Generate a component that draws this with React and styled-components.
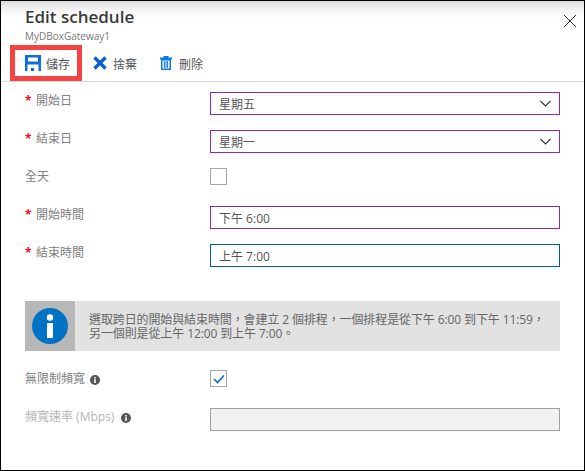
import React from "react";
import styled, { createGlobalStyle } from "styled-components";

const GlobalStyle = createGlobalStyle`
  html, body {
    margin: 0;
    padding: 0;
    background: #fff;
  }
  * {
    box-sizing: border-box;
  }
`;

const FONT = `"Open Sans", "Noto Sans CJK TC", sans-serif`;

const Panel = styled.div`
  width: 585px;
  height: 471px;
  border: 1px solid #000;
  font-family: ${FONT};
  font-size: 12px;
  color: #555;
  background: #fff;
  overflow: hidden;
`;

const Header = styled.div`
  height: 44px;
  padding: 5px 8px 0 24px;
  display: flex;
  justify-content: space-between;
  background: linear-gradient(#dcdcdc 0, #f6f6f6 10px, #fff 18px);
`;

const Titles = styled.div`
  display: flex;
  flex-direction: column;
`;

const Title = styled.div`
  font-size: 17px;
  line-height: 22px;
  font-weight: 600;
  color: #3a3a3a;
`;

const Subtitle = styled.div`
  font-size: 10px;
  line-height: 13px;
  margin-top: 2px;
  color: #777;
`;

const CloseButton = styled.svg`
  width: 12px;
  height: 12px;
  margin-top: 9px;
`;

const Toolbar = styled.div`
  position: relative;
  height: 37px;
  padding-left: 24px;
  display: flex;
  align-items: center;
  border-bottom: 1px solid #d9d9d9;
`;

const ToolButton = styled.div`
  display: flex;
  align-items: center;
  gap: ${(p) => p.$gap}px;
  margin-right: ${(p) => p.$after}px;
  color: #555;
  svg {
    display: block;
  }
`;

const ToolText = styled.span`
  padding-top: 2px;
`;

const Highlight = styled.div`
  position: absolute;
  left: 9px;
  top: 0;
  width: 72px;
  height: 36px;
  border: 5px solid #f44343;
`;

const Form = styled.div`
  padding: 10px 24px 0;
  display: flex;
  flex-direction: column;
`;

const Row = styled.div`
  display: flex;
  height: 23px;
  margin-bottom: ${(p) => p.$after ?? 15}px;
`;

const Label = styled.div`
  width: 185px;
  padding-top: 1px;
  display: flex;
  align-items: flex-start;
  line-height: 16px;
  color: ${(p) => (p.$disabled ? "#b4b4b4" : "#808080")};
`;

const Star = styled.span`
  width: 11px;
  color: #e81123;
  font-weight: 700;
`;

const Field = styled.div`
  width: 350px;
  height: 23px;
  padding: 0 8px;
  display: flex;
  align-items: center;
  justify-content: space-between;
  border: 1px solid ${(p) => p.$border};
  background: ${(p) => p.$bg || "#fff"};
  color: #555;
`;

const Check = styled.div`
  width: 17px;
  height: 17px;
  border: 1px solid #a6a6a6;
  background: #fff;
  display: flex;
  align-items: center;
  justify-content: center;
`;

const InfoBox = styled.div`
  height: 50px;
  margin-bottom: 19px;
  display: flex;
  background: #e2e2e2;
`;

const InfoIconCell = styled.div`
  width: 50px;
  display: flex;
  align-items: center;
  justify-content: center;
  background: #b8b8b8;
`;

const InfoText = styled.div`
  padding: 12px 0 0 14px;
  line-height: 14px;
  letter-spacing: -0.11px;
  color: #666;
  white-space: nowrap;
`;

const Hint = styled.svg`
  width: 10px;
  height: 10px;
  margin: 4px 0 0 ${(p) => p.$gap}px;
`;

const Spacer = styled.div`
  height: ${(p) => p.$h}px;
`;

const Chevron = () => (
  <svg width="11" height="7" viewBox="0 0 11 7" fill="none">
    <path d="M0.5 1 L5.5 6 L10.5 1" stroke="#333" strokeWidth="1.1" />
  </svg>
);

const InfoHint = ({ gap }) => (
  <Hint $gap={gap} viewBox="0 0 10 10">
    <circle cx="5" cy="5" r="5" fill="#555" />
    <rect x="4.2" y="4.2" width="1.6" height="3.8" fill="#fff" />
    <rect x="4.2" y="2" width="1.6" height="1.5" fill="#fff" />
  </Hint>
);

const App = () => {
  return (
    <>
      <GlobalStyle />
      <Panel lang="zh-Hant">
        <Header>
          <Titles>
            <Title>Edit schedule</Title>
            <Subtitle>MyDBoxGateway1</Subtitle>
          </Titles>
          <CloseButton viewBox="0 0 12 12">
            <path d="M0 0 L12 12 M12 0 L0 12" stroke="#333" strokeWidth="1" />
          </CloseButton>
        </Header>
        <Toolbar>
          <Highlight />
          <ToolButton $gap={5} $after={23}>
            <svg width="16" height="16" viewBox="0 0 16 16">
              <path
                fillRule="evenodd"
                d="M0 0 H16 V16 H13.5 V9.5 H2.5 V16 H0 Z M3 2.5 V6.5 H13 V2.5 Z"
                fill="#0a6fd8"
              />
              <rect x="6" y="13" width="3" height="3" fill="#0a6fd8" />
            </svg>
            <ToolText>儲存</ToolText>
          </ToolButton>
          <ToolButton $gap={6} $after={23}>
            <svg width="14" height="14" viewBox="0 0 14 14">
              <path d="M1.5 1.5 L12.5 12.5 M12.5 1.5 L1.5 12.5" stroke="#0a5fd0" strokeWidth="3.4" />
            </svg>
            <ToolText>捨棄</ToolText>
          </ToolButton>
          <ToolButton $gap={7} $after={0}>
            <svg width="12" height="14" viewBox="0 0 12 14">
              <path
                fillRule="evenodd"
                d="M0 1.5 H3.5 V0 H8.5 V1.5 H12 V3.5 H11 V14 H1 V3.5 H0 Z M2.5 4.5 V12.5 H9.5 V4.5 Z"
                fill="#0f78dc"
              />
              <path d="M4.4 5 V12 M6 5 V12 M7.6 5 V12" stroke="#0f78dc" strokeWidth="1" />
            </svg>
            <ToolText>刪除</ToolText>
          </ToolButton>
        </Toolbar>
        <Form>
          <Row>
            <Label><Star>*</Star>開始日</Label>
            <Field $border="#8e2bab">星期五<Chevron /></Field>
          </Row>
          <Row>
            <Label><Star>*</Star>結束日</Label>
            <Field $border="#8e2bab">星期一<Chevron /></Field>
          </Row>
          <Row>
            <Label>全天</Label>
            <Check />
          </Row>
          <Row>
            <Label><Star>*</Star>開始時間</Label>
            <Field $border="#8e2bab">下午 6:00</Field>
          </Row>
          <Row $after={0}>
            <Label><Star>*</Star>結束時間</Label>
            <Field $border="#005bab">上午 7:00</Field>
          </Row>
          <Spacer $h={34} />
          <InfoBox>
            <InfoIconCell>
              <svg width="36" height="36" viewBox="0 0 36 36">
                <circle cx="18" cy="18" r="18" fill="#0072c6" />
                <rect x="15" y="15" width="6" height="15" fill="#fff" />
                <circle cx="18" cy="9.5" r="3.2" fill="#fff" />
              </svg>
            </InfoIconCell>
            <InfoText>
              選取跨日的開始與結束時間，會建立 2 個排程，一個排程是從下午 6:00 到下午 11:59，
              <br />
              另一個則是從上午 12:00 到上午 7:00。
            </InfoText>
          </InfoBox>
          <Row>
            <Label>無限制頻寬<InfoHint gap={5} /></Label>
            <Check>
              <svg width="12" height="10" viewBox="0 0 12 10" fill="none">
                <path d="M1 5 L4.5 8.5 L11 1.5" stroke="#0a6fd8" strokeWidth="1.7" />
              </svg>
            </Check>
          </Row>
          <Row>
            <Label $disabled>頻寬速率 (Mbps)<InfoHint gap={7} /></Label>
            <Field $border="#a0a0a0" $bg="#f1f1f1" />
          </Row>
        </Form>
      </Panel>
    </>
  );
};

export default App;
